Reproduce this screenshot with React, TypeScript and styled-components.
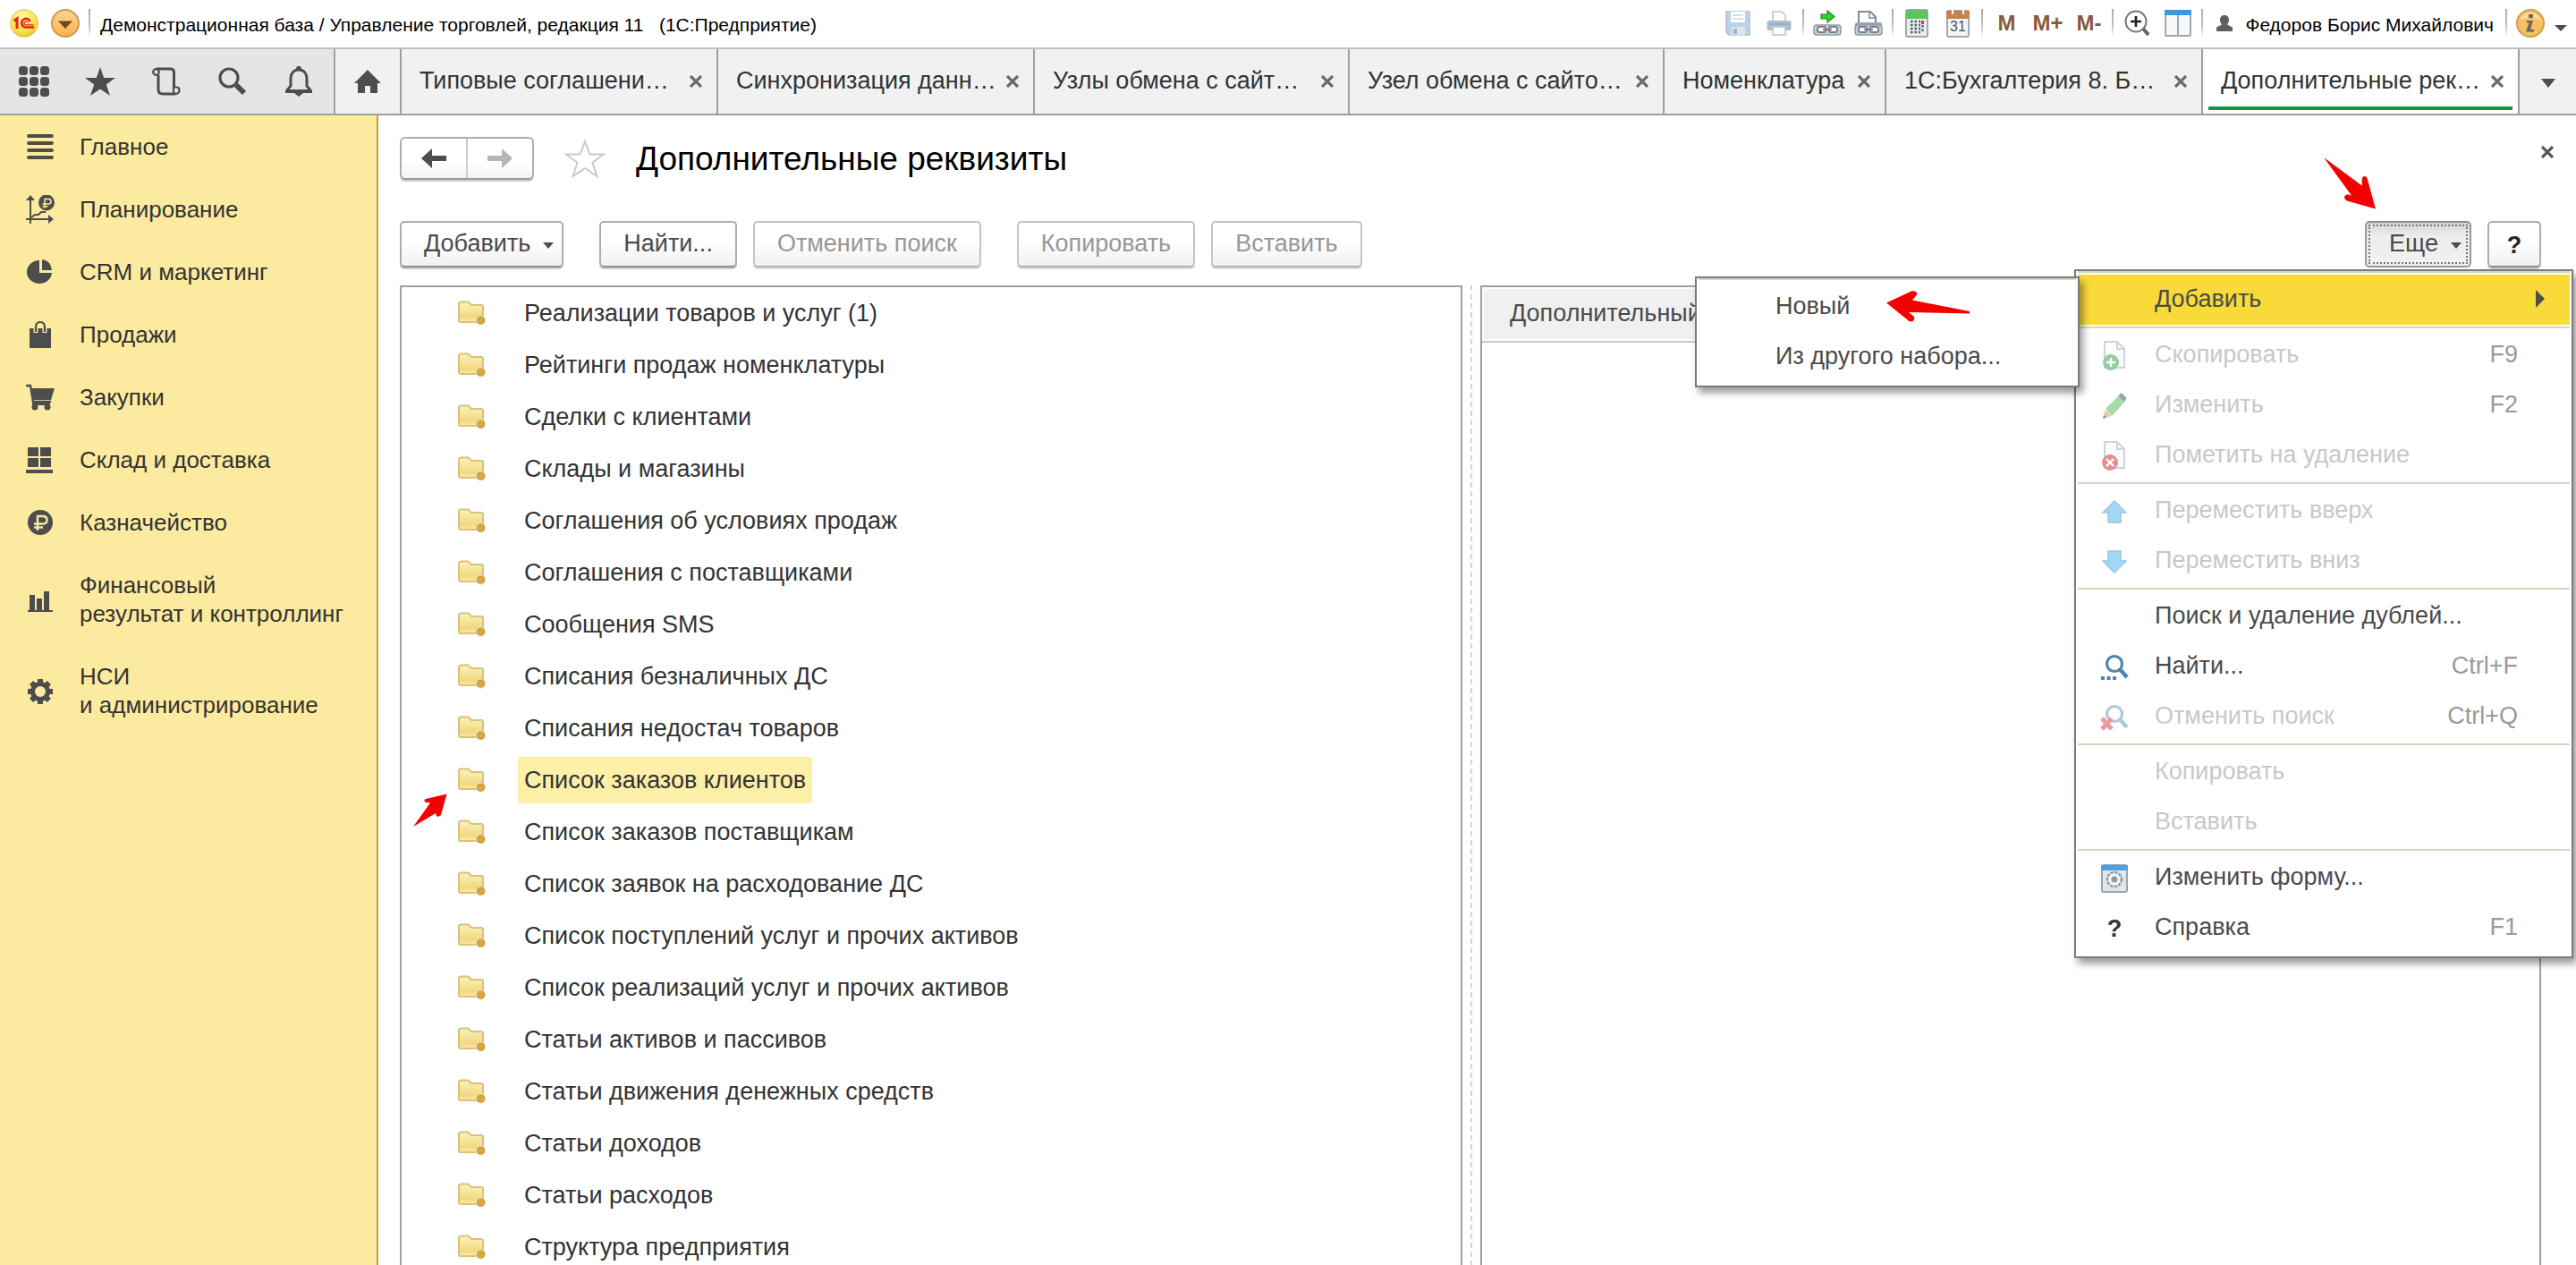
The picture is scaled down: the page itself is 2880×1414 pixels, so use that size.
import React from "react";
import styled, { createGlobalStyle, css } from "styled-components";

const GlobalStyle = createGlobalStyle`
  *, *::before, *::after { box-sizing: border-box; }
  body {
    margin: 0;
    background: #fff;
    font-family: "Liberation Sans", Arial, Helvetica, sans-serif;
    font-size: 27px;
    color: #333;
  }
  button {
    margin: 0;
    padding: 0;
    border: 0;
    background: none;
    font: inherit;
    color: inherit;
    cursor: pointer;
  }
  a { color: inherit; text-decoration: none; }
  ul { list-style: none; margin: 0; padding: 0; }
  svg { display: block; flex: none; }
`;

/* ---------- window frame ---------- */

const Window = styled.div`
  display: flex;
  flex-direction: column;
  height: 100vh;
  overflow: hidden;
`;

const TitleBar = styled.header`
  display: flex;
  align-items: center;
  flex: none;
  height: 55px;
  padding: 0 6px 2px 4px;
  border-bottom: 2px solid #bfbfbf;
  font-size: 21px;
  color: #000;
`;

const Slot = styled.button`
  display: flex;
  align-items: center;
  justify-content: center;
  width: 46px;
  height: 46px;
  color: #875a3a;
  font-size: 24px;
  font-weight: bold;
`;

const Divider = styled.span`
  flex: none;
  width: 2px;
  height: 32px;
  margin: 0 3px;
  background: linear-gradient(#aaa, #c4c4c4 60%, #fff);
`;

const AppTitle = styled.h1`
  flex: 1;
  margin: 0;
  padding: 4px 0 0 8px;
  font-size: 21px;
  font-weight: normal;
  white-space: pre;
`;

const User = styled.button`
  display: flex;
  align-items: center;
  gap: 14px;
  height: 46px;
  padding: 0 10px 0 12px;
  span { padding-top: 4px; }
`;

const SmallSlot = styled(Slot)`
  width: 22px;
  padding-top: 12px;
`;

/* ---------- tab strip ---------- */

const TabStrip = styled.nav`
  display: flex;
  flex: none;
  height: 74px;
  border-bottom: 2px solid #9f9f9f;
  background: #f1f1f1;
`;

const Tools = styled.div`
  display: flex;
  flex: none;
  padding: 0 2px 0 1px;
  background: #e5e5e5;
`;

const ToolButton = styled.button`
  display: flex;
  align-items: center;
  justify-content: center;
  width: 74px;
  color: #4d4d4d;
`;

const HomeTab = styled(ToolButton)`
  flex: none;
  border-left: 2px solid #9f9f9f;
`;

const Tab = styled.div<{ $width: number; $active?: boolean }>`
  display: flex;
  flex: 0 1 ${(p) => p.$width}px;
  align-items: center;
  min-width: 0;
  padding: 0 14px 0 20px;
  border-left: 2px solid #9f9f9f;
  ${(p) =>
    p.$active &&
    css`
      background: linear-gradient(#149648, #149648) 6px 64px / calc(100% - 12px) 4px no-repeat #fff;
    `}
`;

const TabLabel = styled.button`
  flex: 1;
  min-width: 0;
  overflow: hidden;
  padding-bottom: 2px;
  line-height: 32px;
  text-align: left;
  white-space: nowrap;
`;

const CloseButton = styled.button`
  display: flex;
  align-items: center;
  justify-content: center;
  width: 18px;
  height: 34px;
  color: #6a6a6a;
`;

const TabList = styled(ToolButton)`
  flex: 1;
  min-width: 40px;
  padding-top: 4px;
  border-left: 2px solid #9f9f9f;
`;

/* ---------- sections ---------- */

const Body = styled.div`
  display: flex;
  flex: 1;
  min-height: 0;
`;

const Sidebar = styled.nav`
  flex: none;
  width: 423px;
  border-right: 2px solid #b8a42e;
  background: #fcea9f;
  font-size: 26px;
`;

const Section = styled.a`
  display: flex;
  align-items: center;
  gap: 28px;
  padding: 19px 12px 19px 29px;
  line-height: 32px;
  white-space: pre-line;
`;

/* ---------- form ---------- */

const Main = styled.main`
  display: flex;
  flex: 1;
  flex-direction: column;
  min-width: 0;
  padding: 24px 0 0 24px;
`;

const FormHeader = styled.div`
  display: flex;
  align-items: center;
  padding-right: 23px;
  h2 {
    flex: 1;
    margin: 0;
    padding-top: 2px;
    color: #000;
    font-size: 37px;
    font-weight: normal;
    line-height: 46px;
  }
  ${CloseButton} { align-self: flex-start; color: #555; }
`;

const History = styled.div`
  display: flex;
  width: 150px;
  height: 48px;
  border: 2px solid #adadad;
  border-bottom-color: #999;
  border-radius: 6px;
  background: linear-gradient(#fff 60%, #f2f2f2);
  box-shadow: 0 2px 0 #ccc;
  button {
    display: flex;
    flex: 1;
    align-items: center;
    justify-content: center;
    color: #4d4d4d;
  }
  button + button { border-left: 2px solid #ccc; color: #b5b5b5; }
`;

const StarButton = styled.button`
  margin: 0 34px;
`;

const Toolbar = styled.div`
  display: flex;
  gap: 18px;
  height: 52px;
  margin-top: 46px;
  padding-right: 39px;
`;

const Group = styled.div<{ $push?: boolean }>`
  display: flex;
  gap: 18px;
  margin-right: ${(p) => (p.$push ? "auto" : "22px")};
`;

const Button = styled.button<{ $pressed?: boolean }>`
  display: flex;
  align-items: center;
  gap: 14px;
  height: 52px;
  padding: 0 25px 2px;
  border: 2px solid #adadad;
  border-bottom-color: #8c8c8c;
  border-radius: 5px;
  background: linear-gradient(#fff 40%, #f1f1f1);
  box-shadow: 0 2px 0 #ccc;
  color: #4a4a4a;
  white-space: nowrap;
  &:disabled {
    border-color: #c4c4c4;
    border-bottom-color: #b0b0b0;
    box-shadow: 0 2px 0 #ddd;
    color: #979797;
  }
  svg { margin: 4px -16px 0 0; }
  ${(p) =>
    p.$pressed &&
    css`
      border-color: #999;
      border-top-color: #8c8c8c;
      background: linear-gradient(#d6d6d6, #ececec 30%, #f2f2f2);
      box-shadow: none;
      outline: 2px dotted #777;
      outline-offset: -6px;
    `}
`;

const HelpButton = styled(Button)`
  justify-content: center;
  width: 60px;
  padding: 2px 0 0;
  color: #222;
  font-weight: bold;
`;

const Panels = styled.div`
  display: flex;
  flex: 1;
  min-height: 0;
  margin-top: 20px;
  padding-right: 39px;
`;

const SetsPanel = styled.ul`
  flex: 1188;
  overflow: hidden;
  border: 2px solid #9f9f9f;
  border-bottom: 0;
`;

const Splitter = styled.div`
  flex: none;
  width: 2px;
  margin: 0 9px;
  background: repeating-linear-gradient(#d4d4d4 0 6px, #fff 6px 10px);
`;

const PropsPanel = styled.div`
  flex: 1186;
  border: 2px solid #9f9f9f;
  border-bottom: 0;
`;

const PropsTable = styled.table`
  width: 100%;
  border-bottom: 2px solid #c8c8c8;
  border-spacing: 2px;
  th {
    height: 56px;
    padding: 0 29px 2px;
    background: #f0f0f0;
    color: #4a4a4a;
    font-weight: normal;
    text-align: left;
  }
`;

const SetRow = styled.li`
  position: relative;
  display: flex;
  align-items: center;
  height: 58px;
  padding-left: 62px;
`;

const SetName = styled.button<{ $selected?: boolean }>`
  height: 52px;
  margin-left: 36px;
  padding: 0 7px;
  background: ${(p) => (p.$selected ? "#fcefa8" : "transparent")};
  white-space: nowrap;
`;

const RowPointer = styled.span`
  position: absolute;
  left: 12px;
  top: 44px;
`;

/* ---------- menus ---------- */

const MenuAnchor = styled.div`
  position: relative;
  > svg { position: absolute; right: 106px; bottom: 64px; }
`;

const Menu = styled.ul`
  position: absolute;
  z-index: 2;
  top: 54px;
  right: -114px;
  width: 558px;
  padding-bottom: 2px;
  border: 2px solid #7b7b7b;
  background: #fff;
  box-shadow: 4px 6px 8px rgba(0, 0, 0, 0.4);
  color: #4a4a4a;
`;

const Submenu = styled(Menu)`
  top: 2px;
  right: calc(100% - 2px);
  width: 430px;
`;

const MenuGroup = styled.ul`
  margin: 0 2px;
  padding: 2px 0;
  border-top: 2px solid #d8d4bf;
`;

const MenuItem = styled.li<{ $current?: boolean }>`
  position: relative;
  background: ${(p) => (p.$current ? "#f8da38" : "transparent")};
`;

const MenuButton = styled.button`
  display: flex;
  align-items: center;
  width: 100%;
  height: 56px;
  padding: 0 28px 2px 24px;
  text-align: left;
  white-space: nowrap;
  &:disabled { color: #c8c8c8; }
`;

const MenuIcon = styled.span`
  display: flex;
  flex: none;
  justify-content: center;
  width: 34px;
  margin-right: 28px;
  padding-top: 4px;
  color: #333;
  font-weight: bold;
`;

const MenuText = styled.span`
  flex: 1;
`;

const Shortcut = styled.kbd`
  margin-right: 30px;
  color: #999;
  font: inherit;
`;

const NewPointer = styled.span`
  position: absolute;
  left: 210px;
  top: 10px;
`;

/* ---------- drawings ---------- */

const Triangle = ({ w = 14, h = 7 }: { w?: number; h?: number }) => (
  <svg width={w} height={h} viewBox="0 0 14 7" preserveAspectRatio="none">
    <path d="M0 0h14L7 7z" fill="#4d4d4d" />
  </svg>
);

const Cross = () => (
  <svg width="14" height="14" viewBox="0 0 14 14">
    <path d="M1 1l12 12M13 1L1 13" stroke="currentColor" strokeWidth="3.2" />
  </svg>
);

const LogoIcon = () => (
  <svg width="32" height="32" viewBox="0 0 32 32">
    <defs>
      <radialGradient id="logo" cx="45%" cy="30%" r="75%">
        <stop offset="0" stopColor="#fff9a8" />
        <stop offset=".65" stopColor="#fbe04a" />
        <stop offset="1" stopColor="#e8bd2c" />
      </radialGradient>
    </defs>
    <circle cx="16" cy="16" r="15.5" fill="url(#logo)" stroke="#dfc678" />
    <path d="M4.500 13.500l3.500-2.500v11" fill="none" stroke="#e2231a" strokeWidth="3" />
    <path d="M22.500 14a4.800 4.800 0 1 0-4.500 6.500h9" fill="none" stroke="#e2231a" strokeWidth="2.600" />
    <path d="M20 15.500a2 2 0 1 0-1.500 2.300h8" fill="none" stroke="#e2231a" strokeWidth="1.200" />
  </svg>
);

const MainMenuIcon = () => (
  <svg width="32" height="32" viewBox="0 0 32 32">
    <defs>
      <linearGradient id="orb" x1="0" y1="0" x2="0" y2="1">
        <stop offset="0" stopColor="#fbd596" />
        <stop offset="1" stopColor="#fbb04a" />
      </linearGradient>
    </defs>
    <circle cx="16" cy="16" r="15" fill="url(#orb)" stroke="#c99a4c" strokeWidth="2" />
    <path d="M8 13.500h16L16 22z" fill="#6b4a1c" />
  </svg>
);

const SaveIcon = () => (
  <svg width="28" height="28" viewBox="0 0 28 28">
    <path d="M1 1h26v26H4l-3-3z" fill="#bcd2e8" stroke="#a9c0d8" strokeWidth="1.500" />
    <path d="M6 1h16v12H6z" fill="#fff" />
    <path d="M8 5h12M8 9h12" stroke="#c9d2da" strokeWidth="1.500" />
    <path d="M7 18h15v9H7z" fill="#dfe4e8" />
    <path d="M9 20h4v6H9z" fill="#a4b4c4" />
  </svg>
);

const PrintIcon = () => (
  <svg width="28" height="28" viewBox="0 0 28 28">
    <path d="M7 12V1h10l4 4v7" fill="#fff" stroke="#b7c4d2" strokeWidth="1.500" />
    <rect x="0.500" y="11" width="27" height="11" rx="2" fill="#a9bfd2" />
    <path d="M3 15h22" stroke="#8fa9c0" strokeWidth="1.500" />
    <path d="M7 18h14v9H7z" fill="#fff" stroke="#b7c4d2" strokeWidth="1.500" />
  </svg>
);

const Chain = () => (
  <>
    <rect x="1" y="17" width="30" height="11" rx="3" fill="#c9d0d6" stroke="#939ca5" strokeWidth="1.500" />
    <rect x="5" y="19" width="9" height="6" rx="2" fill="#fff" stroke="#76818c" strokeWidth="2" />
    <rect x="18" y="19" width="9" height="6" rx="2" fill="#fff" stroke="#76818c" strokeWidth="2" />
    <path d="M11 22h10" stroke="#76818c" strokeWidth="2" />
  </>
);

const LinkIcon = () => (
  <svg width="32" height="30" viewBox="0 0 32 30">
    <Chain />
    <path d="M9 5h7V1l8 6.500-8 6.500V10H9z" fill="#2fd22b" stroke="#1d8a1c" strokeWidth="1.200" />
  </svg>
);

const PrintLinkIcon = () => (
  <svg width="32" height="30" viewBox="0 0 32 30">
    <path d="M5 17V2h13l6 6v9" fill="#fff" stroke="#7f8b99" strokeWidth="2" />
    <path d="M17 2v7h7" fill="none" stroke="#7f8b99" strokeWidth="1.500" />
    <rect x="1" y="14" width="30" height="8" rx="2" fill="#9aa8b6" />
    <Chain />
  </svg>
);

const CalculatorIcon = () => (
  <svg width="26" height="32" viewBox="0 0 26 32">
    <rect x="1" y="1" width="24" height="30" rx="2" fill="#e9edf0" stroke="#9fa9b2" strokeWidth="2" />
    <path d="M1 1h24v10H1z" fill="#56c85a" />
    <path d="M1 2h24" stroke="#7ab37c" strokeWidth="2" />
    <path d="M6 14h11M6 18h11M6 22h11M6 26h11" stroke="#555e66" strokeWidth="2.400" strokeDasharray="2.500 2" />
    <path d="M18 13h3v4h-3z" fill="#e8323a" />
    <path d="M19.500 18v9" stroke="#555e66" strokeWidth="2.400" strokeDasharray="2.500 2" />
  </svg>
);

const CalendarIcon = () => (
  <svg width="26" height="32" viewBox="0 0 26 32">
    <rect x="1" y="2" width="24" height="29" rx="2" fill="#f4f6f7" stroke="#a2abb4" strokeWidth="2" />
    <path d="M0 2h26v9H0z" fill="#c98150" />
    <path d="M7 0v6M19 0v6" stroke="#fff" strokeWidth="2" />
    <text x="13" y="25" textAnchor="middle" fontSize="16" fontWeight="normal" fill="#4b5560">31</text>
  </svg>
);

const ZoomIcon = () => (
  <svg width="28" height="30" viewBox="0 0 28 30">
    <circle cx="13" cy="13" r="11.500" fill="#fff" stroke="#777" strokeWidth="2" />
    <path d="M13 7v12M7 13h12" stroke="#222" strokeWidth="2.600" />
    <path d="M21 21l6 7" stroke="#666" strokeWidth="4" />
  </svg>
);

const PanesIcon = () => (
  <svg width="30" height="30" viewBox="0 0 30 30">
    <rect x="1" y="1" width="28" height="28" rx="1" fill="#f7f8f9" stroke="#9fa9b4" strokeWidth="2" />
    <path d="M0 0h30v6H0z" fill="#3f96dc" />
    <path d="M15 6v22" stroke="#9fa9b4" strokeWidth="2" />
  </svg>
);

const PersonIcon = () => (
  <svg width="18" height="18" viewBox="0 0 18 18">
    <path d="M9 0c3 0 5 2 5 5 0 2.500-1 4.500-2 5.500l6 3V18H0v-4.500l6-3C5 9.500 4 7.500 4 5c0-3 2-5 5-5z" fill="#5f5f5f" />
  </svg>
);

const InfoIcon = () => (
  <svg width="32" height="32" viewBox="0 0 32 32">
    <circle cx="16" cy="16" r="15" fill="#f5bf63" stroke="#cf9f4c" strokeWidth="2" />
    <path d="M4 13a12.500 12.500 0 0 1 24 0c-7-4-17-4-24 0z" fill="#fbdc9f" />
    <path d="M14 6h5v4h-5zM12 13h7l-3 10h4v2.500h-8.500V24l3-8.500H12z" fill="#6c675d" />
  </svg>
);

const GridIcon = () => (
  <svg width="34" height="34" viewBox="0 0 34 34" fill="currentColor">
    {[0, 12, 24].map((y) => [0, 12, 24].map((x) => <rect key={`${x}-${y}`} x={x} y={y} width="10" height="10" rx="3.500" />))}
  </svg>
);

const StarIcon = () => (
  <svg width="34" height="32" viewBox="0 0 34 32">
    <path d="M17 0l4.200 12H34L23.800 19.500 28 32l-11-7.500L6 32l4.200-12.500L0 12h12.800z" fill="currentColor" />
  </svg>
);

const ScrollIcon = () => (
  <svg width="32" height="32" viewBox="0 0 32 32" fill="none" stroke="currentColor" strokeWidth="3">
    <path d="M5 2h15.500Q24.500 2 24.500 6v16M7 9v16q0 5 5 5h14" />
    <circle cx="4.500" cy="5.500" r="3.300" strokeWidth="2.200" />
    <path d="M24 22.500h3.500q3 0 3 3.500t-4 4q-2.500 0-2.500-3z" strokeWidth="2.200" />
  </svg>
);

const SearchIcon = () => (
  <svg width="32" height="32" viewBox="0 0 32 32" fill="none" stroke="currentColor">
    <circle cx="12" cy="12" r="10" strokeWidth="3.200" />
    <path d="M20 20l9 9" strokeWidth="6" />
  </svg>
);

const BellIcon = () => (
  <svg width="32" height="34" viewBox="0 0 32 34">
    <path d="M16 4c-6 0-9 4.500-9 10v8l-4.500 5.500h27L25 22v-8c0-5.500-3-10-9-10z" fill="none" stroke="currentColor" strokeWidth="3" strokeLinejoin="round" />
    <path d="M14 0h4l1.500 4h-7zM1 27h30v3H1zM11 30h10l-5 4z" fill="currentColor" />
  </svg>
);

const HomeIcon = () => (
  <svg width="30" height="26" viewBox="0 0 30 26">
    <path d="M15 0l15 15h-4v11h-8v-8h-6v8H4V15H0z" fill="currentColor" />
  </svg>
);

const dark = "#4d4d4d";
const pale = "#fcea9f";

const Glyph = ({ children }: { children: React.ReactNode }) => (
  <svg width="32" height="32" viewBox="0 0 32 32">{children}</svg>
);

const sections: { label: string; icon: React.ReactNode }[] = [
  {
    label: "Главное",
    icon: <Glyph><path d="M3 4h26M3 12h26M3 20h26M3 28h26" stroke={dark} strokeWidth="3.800" strokeLinecap="round" /></Glyph>,
  },
  {
    label: "Планирование",
    icon: (
      <Glyph>
        <path d="M5 32V4M0 27h28" stroke={dark} strokeWidth="2" />
        <path d="M0 6l5-6 5 6zM25 22l6 5-6 5z" fill={dark} />
        <path d="M6 25l4-3h4l3-3h5" fill="none" stroke={dark} strokeWidth="2" />
        <circle cx="23" cy="8.500" r="9" fill={dark} />
        <path d="M21 14.500V4.500h4.500q2.500 0 2.500 2.700T25.500 10H18.500M18.500 12.800h6" fill="none" stroke={pale} strokeWidth="1.500" />
      </Glyph>
    ),
  },
  {
    label: "CRM и маркетинг",
    icon: (
      <Glyph>
        <path d="M15 3v14h14a14 13 0 1 1-14-14z" fill={dark} />
        <path d="M18 2q10 1.500 11 12H18z" fill={dark} />
      </Glyph>
    ),
  },
  {
    label: "Продажи",
    icon: (
      <Glyph>
        <path d="M4 9h24v22H4z" fill={dark} />
        <path d="M11 14V8q0-6 5-6t5 6v6" fill="none" stroke={pale} strokeWidth="5" />
        <path d="M11 13V8q0-6 5-6t5 6v5" fill="none" stroke={dark} strokeWidth="2.200" />
      </Glyph>
    ),
  },
  {
    label: "Закупки",
    icon: (
      <Glyph>
        <path d="M0 3h5l3 18h20" fill="none" stroke={dark} strokeWidth="2.400" />
        <path d="M5 6h27l-4 13H7z" fill={dark} />
        <path d="M7 22h20v3H7z" fill={dark} />
        <circle cx="10" cy="27" r="3.500" fill={dark} />
        <circle cx="24" cy="27" r="3.500" fill={dark} />
      </Glyph>
    ),
  },
  {
    label: "Склад и доставка",
    icon: <Glyph><path d="M2 2h12v10H2zM16 2h12v10H16zM2 14h12v10H2zM16 14h12v10H16zM0 27h30v4H0z" fill={dark} /></Glyph>,
  },
  {
    label: "Казначейство",
    icon: (
      <Glyph>
        <circle cx="16" cy="16" r="14" fill={dark} />
        <path d="M13 25V9h6q4.500 0 4.500 4.200T19 17.500H9M9 21.500h10" fill="none" stroke={pale} strokeWidth="2.400" />
      </Glyph>
    ),
  },
  {
    label: "Финансовый\nрезультат и контроллинг",
    icon: <Glyph><path d="M4 11h6v17H4zM12 15h6v13h-6zM20 7h6v21h-6zM2 28h28v2H2z" fill={dark} /></Glyph>,
  },
  {
    label: "НСИ\nи администрирование",
    icon: (
      <Glyph>
        <circle cx="16" cy="17" r="8.500" fill="none" stroke={dark} strokeWidth="5" />
        {[0, 45, 90, 135, 180, 225, 270, 315].map((a) => (
          <path key={a} d="M13 3h6v6h-6z" fill={dark} transform={`rotate(${a} 16 17)`} />
        ))}
      </Glyph>
    ),
  },
];

const FolderIcon = () => (
  <svg width="32" height="28" viewBox="0 0 32 28">
    <defs>
      <linearGradient id="folder" x1="0" y1="0" x2="0" y2="1">
        <stop offset="0" stopColor="#fbf3bd" />
        <stop offset=".75" stopColor="#f0d97f" />
        <stop offset="1" stopColor="#f8ecb8" />
      </linearGradient>
    </defs>
    <path d="M2 4q0-2.500 2.500-2.500h8L16 5h11q2 0 2 2v17H4q-2 0-2-2z" fill="url(#folder)" stroke="#dcc07c" strokeWidth="2" />
    <circle cx="26.500" cy="22" r="5.500" fill="#ecd9a4" />
    <circle cx="26.500" cy="22" r="4" fill="#daa83c" stroke="#c19542" />
  </svg>
);

const BigStar = () => (
  <svg width="46" height="44" viewBox="0 0 46 44">
    <path d="M23 3l5.400 14.500H44L31.500 26.800 36.500 42 23 33 9.500 42l5-15.200L2 17.500h15.600z" fill="#fff" stroke="#c6cace" strokeWidth="2" />
  </svg>
);

const Back = () => (
  <svg width="28" height="22" viewBox="0 0 28 22">
    <path d="M0 11L12 0v8h16v6H12v8z" fill="currentColor" />
  </svg>
);

const Forward = () => (
  <svg width="28" height="22" viewBox="0 0 28 22">
    <path d="M28 11L16 0v8H0v6h16v8z" fill="currentColor" />
  </svg>
);

const Sheet = () => (
  <path d="M3 1h14l8 8v21H3z M17 1v8h8" fill="#fbfcfc" stroke="#cdd3d9" strokeWidth="2" />
);

const icons: Record<string, React.ReactNode> = {
  copy: (
    <svg width="28" height="34" viewBox="0 0 28 34">
      <Sheet />
      <circle cx="10" cy="24" r="9" fill="#92cf9c" />
      <path d="M10 19v10M5 24h10" stroke="#fff" strokeWidth="2.400" />
    </svg>
  ),
  edit: (
    <svg width="28" height="30" viewBox="0 0 28 30">
      <path d="M1 29l3-10 6 7z" fill="#f2c48d" />
      <path d="M1 29l1.200-4 2.600 2.500z" fill="#8b8b8b" />
      <path d="M4 18L18 4l7 7-14 15z" fill="#a5daab" />
      <path d="M18 4l3-3.500q2 0 6.500 5.500L25 10.500z" fill="#9ba0b0" />
    </svg>
  ),
  mark: (
    <svg width="28" height="34" viewBox="0 0 28 34">
      <Sheet />
      <circle cx="9" cy="24" r="9" fill="#e58f95" />
      <path d="M5 20l8 8M13 20l-8 8" stroke="#fff" strokeWidth="2.400" />
    </svg>
  ),
  up: (
    <svg width="28" height="26" viewBox="0 0 28 26">
      <path d="M14 1l13 13h-6v11H7V14H1z" fill="#a3d8f4" stroke="#97c6e4" strokeWidth="1.500" />
    </svg>
  ),
  down: (
    <svg width="28" height="26" viewBox="0 0 28 26">
      <path d="M14 25l13-13h-6V1H7v11H1z" fill="#a3d8f4" stroke="#97c6e4" strokeWidth="1.500" />
    </svg>
  ),
  find: (
    <svg width="32" height="30" viewBox="0 0 32 30">
      <circle cx="16" cy="11" r="8.500" fill="#fff" stroke="#4a86b0" strokeWidth="3.200" />
      <path d="M22 17l8 9" stroke="#4a86b0" strokeWidth="4.500" />
      <path d="M1 27h17" stroke="#4a86b0" strokeWidth="4" strokeDasharray="4 2.500" />
    </svg>
  ),
  cancelFind: (
    <svg width="32" height="30" viewBox="0 0 32 30">
      <circle cx="16" cy="11" r="8.500" fill="#fff" stroke="#adc9dc" strokeWidth="3.200" />
      <path d="M22 17l8 9" stroke="#adc9dc" strokeWidth="4.500" />
      <path d="M2 16l11 12M13 16L2 28" stroke="#ec9a9c" strokeWidth="5" />
    </svg>
  ),
  form: (
    <svg width="30" height="32" viewBox="0 0 30 32">
      <rect x="1" y="1" width="28" height="30" rx="2" fill="#e3e7ea" stroke="#9ba6b1" strokeWidth="2" />
      <path d="M0 1h30v6H0z" fill="#4ea2e4" />
      <circle cx="15" cy="17" r="8" fill="#f3f4f5" stroke="#8f9aa5" strokeWidth="2.500" strokeDasharray="3.500 1.200" />
      <circle cx="15" cy="17" r="3.500" fill="#8f9aa5" />
    </svg>
  ),
  help: "?",
};

/* Red pointers drawn over the form */
const arrowFill = "#f40000";

const MoreArrow = () => (
  <svg width="60" height="60" viewBox="0 0 60 60">
    <path d="M1 1L44 32.700L43.500 26Q44 22 47 22Q49.500 22.500 50 26L59 58.500L27 49.500Q24 48 24 45.500Q25 42 28 42.500L32 43.500Z" fill={arrowFill} />
  </svg>
);

const LeftArrow = () => (
  <svg width="94" height="36" viewBox="0 0 94 36">
    <path d="M0 13.500L28 0.500Q33-.5 34.500 3Q34 5 29 10.500L93 23V25.500L25 24L31 29Q32 33.500 28 34.500Q25 34.500 23 32Z" fill={arrowFill} />
  </svg>
);

const RowArrow = () => (
  <svg width="40" height="38" viewBox="0 0 40 38">
    <path d="M38.500 0.500L32 24Q29 27 27 25L26 22L1 37L20 10.500L14 9.500Q12.500 7 15 6Z" fill={arrowFill} />
  </svg>
);

/* ---------- data ---------- */

const tabs = [
  { label: "Типовые соглашени…", width: 354 },
  { label: "Синхронизация данн…", width: 354 },
  { label: "Узлы обмена с сайт…", width: 352 },
  { label: "Узел обмена с сайто…", width: 352 },
  { label: "Номенклатура", width: 248 },
  { label: "1С:Бухгалтерия 8. Б…", width: 354 },
  { label: "Дополнительные рек…", width: 354, active: true },
];

const sets = [
  "Реализации товаров и услуг (1)",
  "Рейтинги продаж номенклатуры",
  "Сделки с клиентами",
  "Склады и магазины",
  "Соглашения об условиях продаж",
  "Соглашения с поставщиками",
  "Сообщения SMS",
  "Списания безналичных ДС",
  "Списания недостач товаров",
  "Список заказов клиентов",
  "Список заказов поставщикам",
  "Список заявок на расходование ДС",
  "Список поступлений услуг и прочих активов",
  "Список реализаций услуг и прочих активов",
  "Статьи активов и пассивов",
  "Статьи движения денежных средств",
  "Статьи доходов",
  "Статьи расходов",
  "Структура предприятия",
];

const selectedSet = "Список заказов клиентов";

type Item = { label: string; icon?: string; shortcut?: string; disabled?: boolean };

const menuGroups: Item[][] = [
  [
    { label: "Скопировать", icon: "copy", shortcut: "F9", disabled: true },
    { label: "Изменить", icon: "edit", shortcut: "F2", disabled: true },
    { label: "Пометить на удаление", icon: "mark", disabled: true },
  ],
  [
    { label: "Переместить вверх", icon: "up", disabled: true },
    { label: "Переместить вниз", icon: "down", disabled: true },
  ],
  [
    { label: "Поиск и удаление дублей..." },
    { label: "Найти...", icon: "find", shortcut: "Ctrl+F" },
    { label: "Отменить поиск", icon: "cancelFind", shortcut: "Ctrl+Q", disabled: true },
  ],
  [
    { label: "Копировать", disabled: true },
    { label: "Вставить", disabled: true },
  ],
  [
    { label: "Изменить форму...", icon: "form" },
    { label: "Справка", icon: "help", shortcut: "F1" },
  ],
];

const MenuEntry = ({ item }: { item: Item }) => (
  <MenuItem>
    <MenuButton disabled={item.disabled}>
      <MenuIcon>{item.icon && icons[item.icon]}</MenuIcon>
      <MenuText>{item.label}</MenuText>
      {item.shortcut && <Shortcut>{item.shortcut}</Shortcut>}
    </MenuButton>
  </MenuItem>
);

const MoreMenu = () => (
  <Menu>
    <MenuGroup>
      <MenuItem $current>
        <MenuButton>
          <MenuIcon />
          <MenuText>Добавить</MenuText>
          <svg width="10" height="20" viewBox="0 0 10 20"><path d="M0 0l10 10L0 20z" fill="#4d4d4d" /></svg>
        </MenuButton>
        <Submenu>
          <MenuGroup>
            <MenuItem>
              <MenuButton>
                <MenuIcon />
                <MenuText>Новый</MenuText>
              </MenuButton>
              <NewPointer><LeftArrow /></NewPointer>
            </MenuItem>
            <MenuEntry item={{ label: "Из другого набора..." }} />
          </MenuGroup>
        </Submenu>
      </MenuItem>
    </MenuGroup>
    {menuGroups.map((group) => (
      <MenuGroup key={group[0].label}>
        {group.map((item) => <MenuEntry key={item.label} item={item} />)}
      </MenuGroup>
    ))}
  </Menu>
);

export default function App() {
  return (
    <>
      <GlobalStyle />
      <Window>
        <TitleBar>
          <Slot aria-label="1С:Предприятие"><LogoIcon /></Slot>
          <Slot aria-label="Главное меню"><MainMenuIcon /></Slot>
          <Divider />
          <AppTitle>{"Демонстрационная база / Управление торговлей, редакция 11   (1С:Предприятие)"}</AppTitle>
          <Slot aria-label="Сохранить"><SaveIcon /></Slot>
          <Slot aria-label="Печать"><PrintIcon /></Slot>
          <Divider />
          <Slot aria-label="Получить ссылку"><LinkIcon /></Slot>
          <Slot aria-label="Перейти по ссылке"><PrintLinkIcon /></Slot>
          <Divider />
          <Slot aria-label="Калькулятор"><CalculatorIcon /></Slot>
          <Slot aria-label="Календарь"><CalendarIcon /></Slot>
          <Divider />
          <Slot>M</Slot>
          <Slot>M+</Slot>
          <Slot>M-</Slot>
          <Divider />
          <Slot aria-label="Масштаб"><ZoomIcon /></Slot>
          <Slot aria-label="Панели"><PanesIcon /></Slot>
          <Divider />
          <User><PersonIcon /><span>Федоров Борис Михайлович</span></User>
          <Divider />
          <Slot aria-label="Информация"><InfoIcon /></Slot>
          <SmallSlot aria-label="Ещё"><Triangle /></SmallSlot>
        </TitleBar>

        <TabStrip>
          <Tools>
            <ToolButton aria-label="Функции"><GridIcon /></ToolButton>
            <ToolButton aria-label="Избранное"><StarIcon /></ToolButton>
            <ToolButton aria-label="История"><ScrollIcon /></ToolButton>
            <ToolButton aria-label="Поиск"><SearchIcon /></ToolButton>
            <ToolButton aria-label="Оповещения"><BellIcon /></ToolButton>
          </Tools>
          <HomeTab aria-label="Начальная страница"><HomeIcon /></HomeTab>
          {tabs.map((tab) => (
            <Tab key={tab.label} $width={tab.width} $active={tab.active}>
              <TabLabel>{tab.label}</TabLabel>
              <CloseButton aria-label="Закрыть"><Cross /></CloseButton>
            </Tab>
          ))}
          <TabList aria-label="Все вкладки"><Triangle w={16} h={10} /></TabList>
        </TabStrip>

        <Body>
          <Sidebar>
            {sections.map((s) => (
              <Section key={s.label} href="#">
                {s.icon}
                <span>{s.label}</span>
              </Section>
            ))}
          </Sidebar>

          <Main>
            <FormHeader>
              <History>
                <button aria-label="Назад"><Back /></button>
                <button aria-label="Вперед"><Forward /></button>
              </History>
              <StarButton aria-label="В избранное"><BigStar /></StarButton>
              <h2>Дополнительные реквизиты</h2>
              <CloseButton aria-label="Закрыть форму"><Cross /></CloseButton>
            </FormHeader>

            <Toolbar>
              <Group>
                <Button>Добавить <Triangle w={12} /></Button>
              </Group>
              <Group>
                <Button>Найти...</Button>
                <Button disabled>Отменить поиск</Button>
              </Group>
              <Group $push>
                <Button disabled>Копировать</Button>
                <Button disabled>Вставить</Button>
              </Group>
              <MenuAnchor>
                <Button $pressed>Еще <Triangle w={12} /></Button>
                <MoreArrow />
                <MoreMenu />
              </MenuAnchor>
              <HelpButton>?</HelpButton>
            </Toolbar>

            <Panels>
              <SetsPanel>
                {sets.map((name) => (
                  <SetRow key={name}>
                    <FolderIcon />
                    <SetName $selected={name === selectedSet}>{name}</SetName>
                    {name === selectedSet && <RowPointer><RowArrow /></RowPointer>}
                  </SetRow>
                ))}
              </SetsPanel>
              <Splitter />
              <PropsPanel>
                <PropsTable>
                  <thead>
                    <tr><th scope="col">Дополнительный</th></tr>
                  </thead>
                </PropsTable>
              </PropsPanel>
            </Panels>
          </Main>
        </Body>
      </Window>
    </>
  );
}
